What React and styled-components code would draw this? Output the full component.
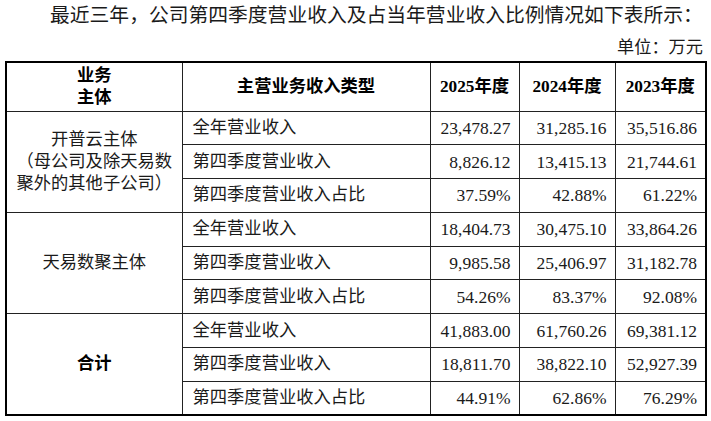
import styled, { createGlobalStyle } from "styled-components";

const GlobalStyle = createGlobalStyle`
  body {
    margin: 0;
    background: #fff;
    color: #1a1a1a;
    font-family: "Liberation Serif", "Noto Sans CJK SC", serif;
  }
`;

const Page = styled.div`
  width: 711px;
  padding-left: 5px;
  box-sizing: border-box;
`;

const Intro = styled.p`
  margin: 0;
  padding-left: 45px;
  font-size: 19.8px;
  line-height: 30px;
  white-space: nowrap;
`;

const Unit = styled.div`
  margin-top: 5px;
  height: 26px;
  line-height: 26px;
  padding-right: 8px;
  text-align: right;
  font-size: 17.2px;
`;

const Table = styled.table`
  width: 700px;
  border-collapse: collapse;
  table-layout: fixed;
  border: 2px solid #000;
  font-size: 17.3px;
`;

const HeadRow = styled.tr`
  height: 49px;
`;

const Row = styled.tr`
  height: 33.8px;
`;

const HeadCell = styled.th`
  padding: 0;
  border: 1px solid #222;
  font-weight: bold;
  color: #000;
  text-align: center;
  line-height: 22px;
`;

const GroupCell = styled.td`
  padding: 0 4px;
  border: 1px solid #222;
  text-align: center;
  line-height: 22px;
  font-weight: ${(p) => (p.$bold ? "bold" : "normal")};
  color: ${(p) => (p.$bold ? "#000" : "#1a1a1a")};
`;

const LabelCell = styled.td`
  padding: 0 0 0 10px;
  border: 1px solid #222;
  line-height: 20px;
  white-space: nowrap;
`;

const NumCell = styled.td`
  padding: 0 8px 0 0;
  border: 1px solid #222;
  text-align: right;
  font-size: 17.5px;
  line-height: 20px;
  white-space: nowrap;
`;

const groups = [
  {
    name: ["开普云主体", "（母公司及除天易数", "聚外的其他子公司）"],
    rows: [
      ["全年营业收入", "23,478.27", "31,285.16", "35,516.86"],
      ["第四季度营业收入", "8,826.12", "13,415.13", "21,744.61"],
      ["第四季度营业收入占比", "37.59%", "42.88%", "61.22%"],
    ],
  },
  {
    name: ["天易数聚主体"],
    rows: [
      ["全年营业收入", "18,404.73", "30,475.10", "33,864.26"],
      ["第四季度营业收入", "9,985.58", "25,406.97", "31,182.78"],
      ["第四季度营业收入占比", "54.26%", "83.37%", "92.08%"],
    ],
  },
  {
    name: ["合计"],
    bold: true,
    rows: [
      ["全年营业收入", "41,883.00", "61,760.26", "69,381.12"],
      ["第四季度营业收入", "18,811.70", "38,822.10", "52,927.39"],
      ["第四季度营业收入占比", "44.91%", "62.86%", "76.29%"],
    ],
  },
];

const Lines = ({ lines }) =>
  lines.map((l, i) => (
    <span key={i}>
      {i > 0 && <br />}
      {l}
    </span>
  ));

export default function App() {
  return (
    <Page>
      <GlobalStyle />
      <Intro>最近三年，公司第四季度营业收入及占当年营业收入比例情况如下表所示：</Intro>
      <Unit>单位：万元</Unit>
      <Table>
        <colgroup>
          <col width="176" />
          <col width="248" />
          <col width="89" />
          <col width="96" />
          <col width="91" />
        </colgroup>
        <thead>
          <HeadRow>
            <HeadCell>
              业务
              <br />
              主体
            </HeadCell>
            <HeadCell>主营业务收入类型</HeadCell>
            <HeadCell>2025年度</HeadCell>
            <HeadCell>2024年度</HeadCell>
            <HeadCell>2023年度</HeadCell>
          </HeadRow>
        </thead>
        <tbody>
          {groups.map((g) =>
            g.rows.map((r, i) => (
              <Row key={g.name[0] + i}>
                {i === 0 && (
                  <GroupCell rowSpan={g.rows.length} $bold={g.bold}>
                    <Lines lines={g.name} />
                  </GroupCell>
                )}
                <LabelCell>{r[0]}</LabelCell>
                <NumCell>{r[1]}</NumCell>
                <NumCell>{r[2]}</NumCell>
                <NumCell>{r[3]}</NumCell>
              </Row>
            ))
          )}
        </tbody>
      </Table>
    </Page>
  );
}
